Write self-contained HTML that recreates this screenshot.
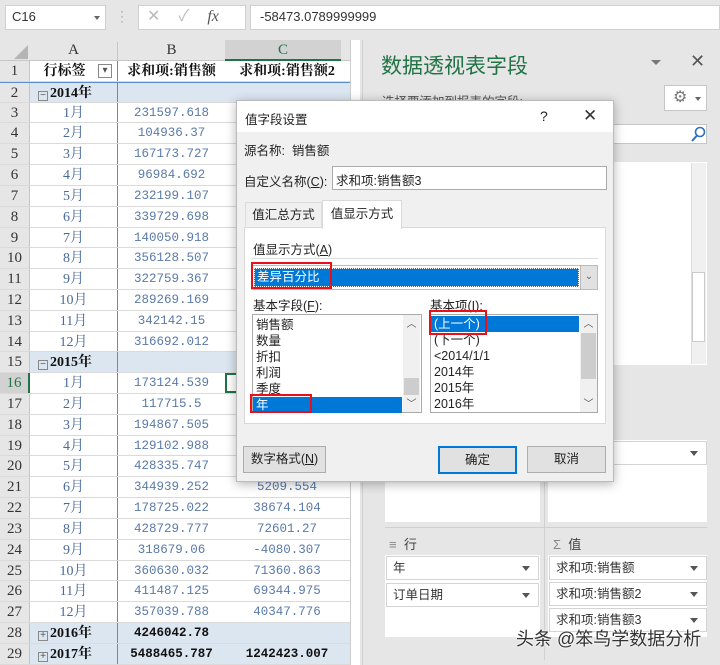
<!DOCTYPE html>
<html><head><meta charset="utf-8"><style>
*{margin:0;padding:0;box-sizing:border-box}
body{width:720px;height:665px;overflow:hidden;background:#e6e6e6;font-family:"Liberation Sans","Noto Sans CJK SC",sans-serif;position:relative;font-size:12px;color:#222}
.a{position:absolute}
.grid{position:absolute;left:0;top:61px;width:350px}
.r{height:20.82px;display:flex;border-bottom:1px solid #dadada;font-family:"Liberation Serif","Noto Serif CJK SC",serif;font-size:14px;line-height:21px;background:#fff}
.r div{white-space:nowrap;overflow:hidden}
.h{width:30px;background:#e6e6e6;border-right:1px solid #c6c6c6;text-align:center;color:#333;font-size:15px}
.ca{width:87px;text-align:center;color:#4a6a9a}
.cb{width:108px;text-align:center;color:#5a7aa8;border-left:1px solid #5b8bd0;font-family:"Liberation Mono",monospace;font-size:12.5px}
.cc{width:124px;text-align:center;color:#5a7aa8;font-family:"Liberation Mono",monospace;font-size:12.5px}
.g{background:#dce6f1}
.g .ca{text-align:left;padding-left:8px;color:#111;font-weight:bold;overflow:visible}
.g .cb,.g .cc{color:#111;font-weight:bold}
.bx{display:inline-block;width:10px;height:10px;border:1px solid #888;font-size:10px;line-height:8px;text-align:center;margin-right:2px;vertical-align:-1px;font-weight:normal;color:#555;font-family:"Liberation Sans",sans-serif}
.list div{height:16px;line-height:16px;padding-left:3px;font-size:12.5px}
.btn{position:absolute;background:#e1e1e1;border:1px solid #adadad;text-align:center;line-height:25px;font-size:12.5px}
.fb{position:absolute;background:#fff;border:1px solid #d4d4d4;height:24px;line-height:22px;padding-left:6px;font-size:12.5px;color:#333}
.fb:after{content:"";position:absolute;right:8px;top:9px;border:4px solid transparent;border-top:5px solid #555}
.red{position:absolute;border:2px solid #e8101a}
</style></head><body>
<div class="a" style="left:5px;top:5px;width:101px;height:25px;background:#fff;border:1px solid #d0d0d0;padding:3px 6px;font-size:13px;color:#333">C16<span style="position:absolute;right:5px;top:10px;border:3px solid transparent;border-top:4px solid #666"></span></div>
<div class="a" style="left:120px;top:9px;color:#999;font-size:12px;line-height:5px">·<br>·<br>·</div>
<div class="a" style="left:138px;top:5px;width:108px;height:25px;background:#fff;border:1px solid #d0d0d0;color:#bbb;font-size:16px;line-height:22px"><span style="margin-left:8px">✕</span><span style="margin-left:18px">✓</span><span style="margin-left:18px;color:#555;font-family:'Liberation Serif',serif;font-style:italic">fx</span></div>
<div class="a" style="left:250px;top:5px;width:470px;height:25px;background:#fff;border:1px solid #d0d0d0;padding:3px 9px;font-size:13px;color:#333">-58473.0789999999</div>
<div class="a" style="left:0;top:40px;width:350px;height:21px;background:#e6e6e6;border-bottom:1px solid #c6c6c6;font-family:'Liberation Serif',serif;font-size:15px;color:#333">
<div class="a" style="left:14px;top:5px;border:7px solid transparent;border-right-color:#b5b5b5;border-bottom-color:#b5b5b5"></div>
<div class="a" style="left:30px;width:87px;text-align:center;top:2px">A</div>
<div class="a" style="left:117px;width:108px;text-align:center;top:2px;border-left:1px solid #c6c6c6;height:19px">B</div>
<div class="a" style="left:225px;width:116px;text-align:center;top:0;height:21px;padding-top:2px;background:#d2d2d2;border-bottom:2px solid #217346;color:#217346">C</div>
</div>
<div class="a" style="left:350px;top:40px;width:10px;height:625px;background:#fff;border-left:1px solid #ccc"></div>
<div class="grid">
<div class="r"><div class="h">1</div><div class="ca" style="font-weight:bold;color:#111;position:relative;padding-right:18px">行标签<span class="bx" style="position:absolute;right:3px;top:3px;width:14px;height:14px;line-height:12px">▾</span></div><div class="cb" style="font-weight:bold;color:#111;font-family:'Liberation Serif','Noto Serif CJK SC',serif;font-size:14px">求和项:销售额</div><div class="cc" style="font-weight:bold;color:#111;font-family:'Liberation Serif','Noto Serif CJK SC',serif;font-size:14px">求和项:销售额2</div></div>
<div class="r g" style="border-top:1px solid #5b8bd0"><div class="h">2</div><div class="ca"><span class="bx">−</span>2014年</div><div class="cb"></div><div class="cc"></div></div>
<div class="r"><div class="h">3</div><div class="ca">1月</div><div class="cb">231597.618</div><div class="cc"></div></div>
<div class="r"><div class="h">4</div><div class="ca">2月</div><div class="cb">104936.37</div><div class="cc"></div></div>
<div class="r"><div class="h">5</div><div class="ca">3月</div><div class="cb">167173.727</div><div class="cc"></div></div>
<div class="r"><div class="h">6</div><div class="ca">4月</div><div class="cb">96984.692</div><div class="cc"></div></div>
<div class="r"><div class="h">7</div><div class="ca">5月</div><div class="cb">232199.107</div><div class="cc"></div></div>
<div class="r"><div class="h">8</div><div class="ca">6月</div><div class="cb">339729.698</div><div class="cc"></div></div>
<div class="r"><div class="h">9</div><div class="ca">7月</div><div class="cb">140050.918</div><div class="cc"></div></div>
<div class="r"><div class="h">10</div><div class="ca">8月</div><div class="cb">356128.507</div><div class="cc"></div></div>
<div class="r"><div class="h">11</div><div class="ca">9月</div><div class="cb">322759.367</div><div class="cc"></div></div>
<div class="r"><div class="h">12</div><div class="ca">10月</div><div class="cb">289269.169</div><div class="cc"></div></div>
<div class="r"><div class="h">13</div><div class="ca">11月</div><div class="cb">342142.15</div><div class="cc"></div></div>
<div class="r"><div class="h">14</div><div class="ca">12月</div><div class="cb">316692.012</div><div class="cc"></div></div>
<div class="r g"><div class="h">15</div><div class="ca"><span class="bx">−</span>2015年</div><div class="cb"></div><div class="cc"></div></div>
<div class="r"><div class="h" style="background:#d2d2d2;color:#217346;border-right:2px solid #217346">16</div><div class="ca">1月</div><div class="cb">173124.539</div><div class="cc" style="border:2px solid #217346"></div></div>
<div class="r"><div class="h">17</div><div class="ca">2月</div><div class="cb">117715.5</div><div class="cc"></div></div>
<div class="r"><div class="h">18</div><div class="ca">3月</div><div class="cb">194867.505</div><div class="cc"></div></div>
<div class="r"><div class="h">19</div><div class="ca">4月</div><div class="cb">129102.988</div><div class="cc"></div></div>
<div class="r"><div class="h">20</div><div class="ca">5月</div><div class="cb">428335.747</div><div class="cc"></div></div>
<div class="r"><div class="h">21</div><div class="ca">6月</div><div class="cb">344939.252</div><div class="cc">5209.554</div></div>
<div class="r"><div class="h">22</div><div class="ca">7月</div><div class="cb">178725.022</div><div class="cc">38674.104</div></div>
<div class="r"><div class="h">23</div><div class="ca">8月</div><div class="cb">428729.777</div><div class="cc">72601.27</div></div>
<div class="r"><div class="h">24</div><div class="ca">9月</div><div class="cb">318679.06</div><div class="cc">-4080.307</div></div>
<div class="r"><div class="h">25</div><div class="ca">10月</div><div class="cb">360630.032</div><div class="cc">71360.863</div></div>
<div class="r"><div class="h">26</div><div class="ca">11月</div><div class="cb">411487.125</div><div class="cc">69344.975</div></div>
<div class="r"><div class="h">27</div><div class="ca">12月</div><div class="cb">357039.788</div><div class="cc">40347.776</div></div>
<div class="r g"><div class="h">28</div><div class="ca"><span class="bx">+</span>2016年</div><div class="cb">4246042.78</div><div class="cc"></div></div>
<div class="r g"><div class="h">29</div><div class="ca"><span class="bx">+</span>2017年</div><div class="cb">5488465.787</div><div class="cc">1242423.007</div></div>
</div>
<div class="a" style="left:362px;top:40px;width:358px;height:625px;background:#e6e6e6;border-left:1px solid #d0d0d0"></div>
<div class="a" style="left:381px;top:50px;font-size:21px;color:#217346">数据透视表字段</div>
<div class="a" style="left:651px;top:60px;border:5px solid transparent;border-top:5px solid #777"></div>
<div class="a" style="left:690px;top:51px;font-size:18px;color:#555">✕</div>
<div class="a" style="left:382px;top:91px;font-size:12.5px;color:#555">选择要添加到报表的字段:</div>
<div class="a" style="left:664px;top:85px;width:43px;height:26px;background:#fff;border:1px solid #c6c6c6;font-size:16px;color:#777;padding-left:8px;line-height:24px">⚙<span style="position:absolute;right:5px;top:11px;border:3px solid transparent;border-top:4px solid #666"></span></div>
<div class="a" style="left:600px;top:124px;width:107px;height:20px;background:#fff;border:1px solid #c6c6c6"></div>
<svg class="a" style="left:690px;top:126px" width="16" height="16"><circle cx="10" cy="6" r="4.5" fill="none" stroke="#2b6fc4" stroke-width="1.6"/><line x1="7" y1="9.5" x2="2" y2="15" stroke="#2b6fc4" stroke-width="2"/></svg>
<div class="a" style="left:600px;top:162px;width:107px;height:203px;background:#fff"></div>
<div class="a" style="left:691px;top:163px;width:15px;height:201px;background:#f0f0f0;border-left:1px solid #ddd"></div>
<div class="a" style="left:692px;top:272px;width:13px;height:70px;background:#fff;border:1px solid #ccc"></div>
<div class="a" style="left:385px;top:440px;width:155px;height:82px;background:#fff"></div>
<div class="a" style="left:548px;top:440px;width:159px;height:82px;background:#fff"></div>
<div class="fb" style="left:549px;top:441px;width:158px"></div>
<div class="a" style="left:385px;top:527px;width:322px;height:1px;background:#d0d0d0"></div>
<div class="a" style="left:544px;top:440px;width:1px;height:220px;background:#d0d0d0"></div>
<div class="a" style="left:389px;top:534px;font-size:13px;color:#444"><span style="color:#888">≡</span>&nbsp; 行</div>
<div class="a" style="left:553px;top:534px;font-size:13px;color:#444"><span style="color:#888">Σ</span>&nbsp; 值</div>
<div class="a" style="left:385px;top:555px;width:155px;height:82px;background:#fff"></div>
<div class="a" style="left:548px;top:555px;width:159px;height:82px;background:#fff"></div>
<div class="fb" style="left:386px;top:556px;width:153px">年</div>
<div class="fb" style="left:386px;top:583px;width:153px">订单日期</div>
<div class="fb" style="left:549px;top:556px;width:158px">求和项:销售额</div>
<div class="fb" style="left:549px;top:582px;width:158px">求和项:销售额2</div>
<div class="fb" style="left:549px;top:608px;width:158px">求和项:销售额3</div>
<div class="a" style="left:516px;top:625px;font-size:18px;color:#333;text-shadow:0 0 2px #fff,0 0 2px #fff">头条 @笨鸟学数据分析</div>
<div class="a" style="left:236px;top:100px;width:378px;height:382px;background:#f0f0f0;border:1px solid #bbb;box-shadow:0 2px 10px rgba(0,0,0,.3)"></div>
<div class="a" style="left:237px;top:101px;width:376px;height:31px;background:#fff"></div>
<div class="a" style="left:245px;top:109px;font-size:12.5px">值字段设置</div>
<div class="a" style="left:540px;top:108px;font-size:14px">?</div>
<div class="a" style="left:583px;top:106px;font-size:17px;color:#333">✕</div>
<div class="a" style="left:244px;top:140px;font-size:12.5px">源名称:&nbsp; 销售额</div>
<div class="a" style="left:244px;top:171px;font-size:12.5px">自定义名称(<u>C</u>):</div>
<div class="a" style="left:332px;top:166px;width:275px;height:24px;background:#fff;border:1px solid #aaa;padding:3px 3px;font-size:12.5px">求和项:销售额3</div>
<div class="a" style="left:245px;top:202px;width:77px;height:25px;font-size:12.5px;text-align:center;line-height:25px;border:1px solid #ddd;border-bottom:none">值汇总方式</div>
<div class="a" style="left:244px;top:227px;width:362px;height:197px;background:#fff;border:1px solid #d9d9d9"></div>
<div class="a" style="left:322px;top:200px;width:80px;height:29px;background:#fff;border:1px solid #d9d9d9;border-bottom:none;font-size:12.5px;text-align:center;line-height:27px">值显示方式</div>
<div class="a" style="left:253px;top:239px;font-size:12.5px">值显示方式(<u>A</u>)</div>
<div class="a" style="left:252px;top:258px;width:346px;height:1px;background:#ddd"></div>
<div class="a" style="left:251px;top:265px;width:347px;height:25px;background:#fff;border:1px solid #bbb"></div>
<div class="a" style="left:254px;top:268px;width:325px;height:19px;background:#0078d7;color:#fff;font-size:12.5px;line-height:19px;padding-left:3px;outline:1px dotted #fff;outline-offset:-1px">差异百分比</div>
<div class="a" style="left:580px;top:266px;width:17px;height:23px;background:#e1e1e1;border-left:1px solid #bbb;font-size:10px;text-align:center;line-height:22px;color:#666">⌄</div>
<div class="red" style="left:251px;top:262px;width:81px;height:27px"></div>
<div class="a" style="left:253px;top:295px;font-size:12.5px">基本字段(<u>F</u>):</div>
<div class="a" style="left:430px;top:295px;font-size:12.5px">基本项(<u>I</u>):</div>
<div class="a list" style="left:252px;top:314px;width:170px;height:99px;background:#fff;border:1px solid #aaa;padding-top:2px">
<div>销售额</div><div>数量</div><div>折扣</div><div>利润</div><div>季度</div><div style="background:#0078d7;color:#fff;width:149px">年</div></div>
<div class="a" style="left:403px;top:315px;width:17px;height:97px;background:#f0f0f0;font-size:10px;color:#555;text-align:center">︿<div style="position:absolute;top:63px;left:1px;width:15px;height:17px;background:#cdcdcd"></div><div style="position:absolute;top:80px;width:17px">﹀</div></div>
<div class="a list" style="left:430px;top:314px;width:168px;height:99px;background:#fff;border:1px solid #aaa;padding-top:1px">
<div style="background:#0078d7;color:#fff;width:148px">(上一个)</div><div>(下一个)</div><div>&lt;2014/1/1</div><div>2014年</div><div>2015年</div><div>2016年</div></div>
<div class="a" style="left:580px;top:315px;width:17px;height:97px;background:#f0f0f0;font-size:10px;color:#555;text-align:center">︿<div style="position:absolute;top:18px;left:1px;width:15px;height:46px;background:#cdcdcd"></div><div style="position:absolute;top:80px;width:17px">﹀</div></div>
<div class="red" style="left:250px;top:394px;width:62px;height:19px"></div>
<div class="red" style="left:429px;top:310px;width:58px;height:25px"></div>
<div class="btn" style="left:243px;top:446px;width:83px;height:27px">数字格式(<u>N</u>)</div>
<div class="btn" style="left:438px;top:446px;width:79px;height:28px;border:2px solid #0078d7;line-height:24px">确定</div>
<div class="btn" style="left:527px;top:446px;width:79px;height:27px">取消</div>
</body></html>
